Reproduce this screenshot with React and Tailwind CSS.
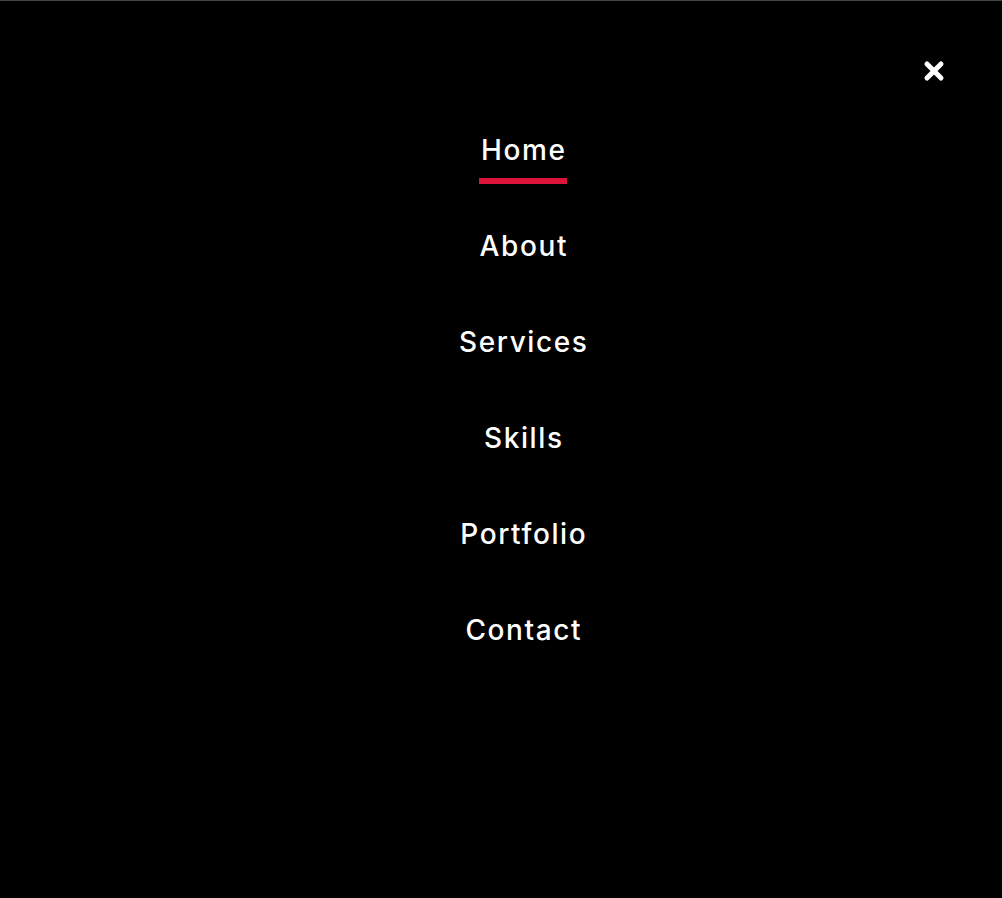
export default function App() {
  const items = ["Home", "About", "Services", "Skills", "Portfolio", "Contact"];
  return (
    <div className="min-h-[898px] w-full bg-black border-t border-[#454545] flex flex-col" style={{ fontFamily: "Inter, 'Noto Sans', sans-serif" }}>
      <div className="flex justify-end pt-[58px] pr-[56px]">
        <button className="w-6 h-6 flex items-center justify-center">
          <svg width="24" height="24" viewBox="0 0 24 24">
            <path d="M5 5 L19 19 M19 5 L5 19" stroke="white" strokeWidth="5" strokeLinecap="round" />
          </svg>
        </button>
      </div>
      <ul className="flex flex-col items-center gap-[60px] mt-[49px] pl-11">
        {items.map((it, i) => (
          <li key={it} className="relative">
            <a className="block text-[28px] leading-9 font-medium tracking-[1.6px] pl-[1.6px] text-white">{it}</a>
            {i === 0 && <span className="absolute left-0 right-0 top-[calc(100%+10px)] h-[6px] bg-[#dc143c]" />}
          </li>
        ))}
      </ul>
    </div>
  );
}
